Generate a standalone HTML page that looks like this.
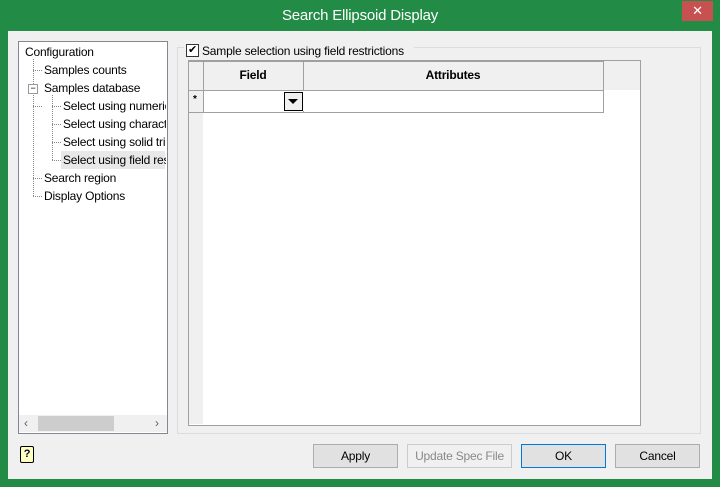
<!DOCTYPE html>
<html><head><style>
body{margin:0;width:720px;height:487px;background:#228b45;font-family:"Liberation Sans",sans-serif;font-size:12px;letter-spacing:-0.2px;position:relative;overflow:hidden;color:#000}
.a{position:absolute}
.btn{position:absolute;top:444px;height:22px;border:1px solid #adadad;background:#e1e1e1;text-align:center;line-height:22px;font-size:12px}
</style></head><body>
<div class="a" style="left:0;top:0;width:720px;height:31px;color:#fff;font-size:15px;text-align:center;line-height:31px">Search Ellipsoid Display</div>
<div class="a" style="left:682px;top:1px;width:31px;height:20px;background:#c75050;color:#fff;text-align:center;line-height:20px;font-size:13px">✕</div>
<div class="a" style="left:8px;top:31px;width:704px;height:448px;background:#f0f0f0"></div>
<!-- tree -->
<div class="a" style="left:18px;top:41px;width:148px;height:391px;background:#fff;border:1px solid #828790"></div>
<div class="a" style="left:25px;top:43px;line-height:18px">Configuration</div>
<div class="a" style="left:33px;top:59px;width:0;height:137px;border-left:1px dotted #888"></div>
<div class="a" style="left:52px;top:95px;width:0;height:65px;border-left:1px dotted #888"></div>
<div class="a" style="left:33px;top:70px;width:9px;border-top:1px dotted #888"></div>
<div class="a" style="left:33px;top:106px;width:9px;border-top:1px dotted #888"></div>
<div class="a" style="left:33px;top:178px;width:9px;border-top:1px dotted #888"></div>
<div class="a" style="left:33px;top:196px;width:9px;border-top:1px dotted #888"></div>
<div class="a" style="left:52px;top:106px;width:9px;border-top:1px dotted #888"></div>
<div class="a" style="left:52px;top:124px;width:9px;border-top:1px dotted #888"></div>
<div class="a" style="left:52px;top:142px;width:9px;border-top:1px dotted #888"></div>
<div class="a" style="left:52px;top:160px;width:9px;border-top:1px dotted #888"></div>
<div class="a" style="left:28px;top:84px;width:8px;height:8px;border:1px solid #999;background:#fff;font-size:9px;line-height:7px;text-align:center">−</div>
<div class="a" style="left:61px;top:151px;width:104px;height:18px;background:#e8e8e8"></div>
<div class="a" style="left:44px;top:61px;line-height:18px">Samples counts</div>
<div class="a" style="left:44px;top:79px;line-height:18px">Samples database</div>
<div class="a" style="left:63px;top:97px;width:103px;overflow:hidden;white-space:nowrap;line-height:18px">Select using numeric</div>
<div class="a" style="left:63px;top:115px;width:103px;overflow:hidden;white-space:nowrap;line-height:18px">Select using character</div>
<div class="a" style="left:63px;top:133px;width:103px;overflow:hidden;white-space:nowrap;line-height:18px">Select using solid tri</div>
<div class="a" style="left:63px;top:151px;width:103px;overflow:hidden;white-space:nowrap;line-height:18px">Select using field res</div>
<div class="a" style="left:44px;top:169px;line-height:18px">Search region</div>
<div class="a" style="left:44px;top:187px;line-height:18px">Display Options</div>
<div class="a" style="left:19px;top:415px;width:148px;height:17px;background:#f0f0f0"></div>
<div class="a" style="left:38px;top:416px;width:76px;height:15px;background:#cdcdcd"></div>
<div class="a" style="left:24px;top:415px;line-height:17px;color:#606060">‹</div>
<div class="a" style="left:155px;top:415px;line-height:17px;color:#606060">›</div>
<!-- group -->
<div class="a" style="left:177px;top:47px;width:522px;height:385px;border:1px solid #dcdcdc"></div>
<div class="a" style="left:184px;top:44px;width:230px;height:14px;background:#f0f0f0"></div>
<div class="a" style="left:186px;top:44px;width:11px;height:11px;border:1px solid #333;background:#fff;font-size:11px;line-height:11px;text-align:center">✔</div>
<div class="a" style="left:202px;top:44px;line-height:14px">Sample selection using field restrictions</div>
<div class="a" style="left:188px;top:60px;width:451px;height:364px;border:1px solid #a0a0a0;background:#fff"></div>
<div class="a" style="left:189px;top:61px;width:451px;height:29px;background:#f0f0f0"></div>
<div class="a" style="left:189px;top:61px;width:14px;height:363px;background:#f0f0f0"></div>
<div class="a" style="left:188px;top:61px;width:414px;height:50px;border:1px solid #a0a0a0"></div>
<div class="a" style="left:203px;top:61px;width:0;height:51px;border-left:1px solid #a0a0a0"></div>
<div class="a" style="left:303px;top:61px;width:0;height:51px;border-left:1px solid #a0a0a0"></div>
<div class="a" style="left:188px;top:90px;width:415px;border-top:1px solid #a0a0a0"></div>
<div class="a" style="left:204px;top:91px;width:398px;height:20px;background:#fff"></div>
<div class="a" style="left:203px;top:68px;width:100px;text-align:center;font-weight:bold">Field</div>
<div class="a" style="left:303px;top:68px;width:300px;text-align:center;font-weight:bold">Attributes</div>
<div class="a" style="left:193px;top:94px;font-size:10px;font-weight:bold">*</div>
<div class="a" style="left:284px;top:92px;width:17px;height:17px;border:1px solid #000;background:#f0f0f0"></div>
<div class="a" style="left:288px;top:99px;width:0;height:0;border-left:5px solid transparent;border-right:5px solid transparent;border-top:5px solid #000"></div>
<!-- bottom -->
<div class="a" style="left:20px;top:446px;width:12px;height:15px;border:1px solid #000;border-radius:2px;background:#ffffc0;font-size:11px;font-weight:bold;text-align:center;line-height:15px;color:#003">?</div>
<div class="btn" style="left:313px;width:83px">Apply</div>
<div class="btn" style="left:407px;width:103px;color:#888;border-color:#ccc;background:#f0f0f0">Update Spec File</div>
<div class="btn" style="left:521px;width:83px;border-color:#0078d7">OK</div>
<div class="btn" style="left:615px;width:83px">Cancel</div>
</body></html>
